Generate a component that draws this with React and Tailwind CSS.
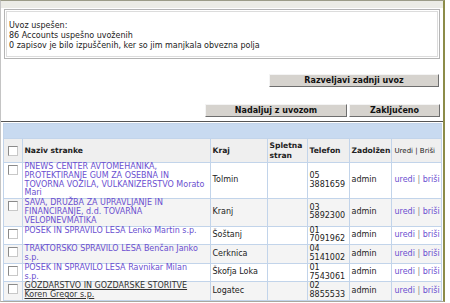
import React from "react";

const rows = [
  {
    name: ["PNEWS CENTER AVTOMEHANIKA,", "PROTEKTIRANJE GUM ZA OSEBNA IN", "TOVORNA VOZILA, VULKANIZERSTVO Morato", "Mari"],
    kraj: "Tolmin",
    tel: ["05", "3881659"],
  },
  {
    name: ["SAVA, DRUŽBA ZA UPRAVLJANJE IN", "FINANCIRANJE, d.d. TOVARNA", "VELOPNEVMATIKA"],
    kraj: "Kranj",
    tel: ["03", "5892300"],
  },
  { name: ["POSEK IN SPRAVILO LESA Lenko Martin s.p."], kraj: "Šoštanj", tel: ["01", "7091962"] },
  { name: ["TRAKTORSKO SPRAVILO LESA Benčan Janko", "s.p."], kraj: "Cerknica", tel: ["04", "5141002"] },
  { name: ["POSEK IN SPRAVILO LESA Ravnikar Milan", "s.p."], kraj: "Škofja Loka", tel: ["01", "7543061"] },
  { name: ["GOZDARSTVO IN GOZDARSKE STORITVE", "Koren Gregor s.p."], kraj: "Logatec", tel: ["02", "8855533"], hover: true },
];

function Checkbox() {
  return (
    <span className="block w-[10px] h-[10px] border border-[#8a8a8a] border-r-[#c8c8c8] border-b-[#c8c8c8] bg-white" />
  );
}

function Button({ children, className }) {
  return (
    <button
      className={
        "h-[13px] bg-[#d6d3ce] border border-[#f4f4f4] border-r-[#6e6e6e] border-b-[#6e6e6e] text-[8px] font-bold leading-[11px] text-[#111] " +
        className
      }
    >
      {children}
    </button>
  );
}

export default function App() {
  return (
    <div className="w-[450px] h-[303px] bg-white overflow-hidden font-['DejaVu_Sans',sans-serif] text-[8px] text-[#222]">
      <div className="w-[445px] h-[302px] border-t border-l border-r-2 border-b border-t-[#9c9c88] border-l-[#c4c4c4] border-r-[#8c8c48] border-b-[#a8a8a0] flex flex-col">
        <div className="h-[7px] bg-[#ececE6] shrink-0" />

        {/* Rezultat uvoza */}
        <div className="mx-[3px] mt-[1px] h-[50px] border border-[#b4b4b4] p-px shrink-0">
          <div className="h-full border border-[#dcdcdc] pt-[9px] pl-[2px] leading-[10px]">
            <div>Uvoz uspešen:</div>
            <div>86 Accounts uspešno uvoženih</div>
            <div>0 zapisov je bilo izpuščenih, ker so jim manjkala obvezna polja</div>
          </div>
        </div>

        <div className="flex justify-end pr-[4px] mt-[15px]">
          <Button className="w-[170px]">Razveljavi zadnji uvoz</Button>
        </div>
        <div className="flex justify-end gap-[2px] pr-[3px] mt-[17px]">
          <Button className="w-[142px]">Nadaljuj z uvozom</Button>
          <Button className="w-[91px]">Zaključeno</Button>
        </div>

        <div className="mt-[4px] border-t border-[#555]" />

        {/* Tabela strank */}
        <div className="ml-[2px] mr-px mt-px border border-[#c2d4ea] border-b-0">
          <div className="h-[14px] bg-[#c8daf0]" />
          <table className="w-full border-collapse table-fixed">
            <colgroup>
              <col className="w-[18px]" />
              <col className="w-[188px]" />
              <col className="w-[57px]" />
              <col className="w-[40px]" />
              <col className="w-[42px]" />
              <col className="w-[42px]" />
              <col />
            </colgroup>
            <thead>
              <tr className="bg-[#efefef] h-[24px] font-bold leading-[10px] text-[7.6px]">
                <th className="border border-[#c2d4ea] border-l-0 align-middle pl-[4px]">
                  <Checkbox />
                </th>
                <th className="border border-[#c2d4ea] text-left px-[2px]">Naziv stranke</th>
                <th className="border border-[#c2d4ea] text-left px-[2px]">Kraj</th>
                <th className="border border-[#c2d4ea] text-left px-[2px]">
                  Spletna
                  <br />
                  stran
                </th>
                <th className="border border-[#c2d4ea] text-left px-[2px]">Telefon</th>
                <th className="border border-[#c2d4ea] text-left px-[2px] whitespace-nowrap">Zadolžen</th>
                <th className="border border-[#c2d4ea] border-r-0 text-left pl-[3px] pr-0 font-normal text-[7px] whitespace-nowrap">
                  Uredi | Briši
                </th>
              </tr>
            </thead>
            <tbody className="leading-[8.8px]">
              {rows.map((r, i) => (
                <tr key={i} className={i % 2 === 1 ? "bg-[#f4f4f4]" : "bg-white"}>
                  <td className="border border-[#c2d4ea] border-l-0 align-top pl-[4px] pt-[2px]">
                    <Checkbox />
                  </td>
                  <td className="border border-[#c2d4ea] align-top px-[2px]">
                    <a
                      href="#"
                      className={r.hover ? "text-[#333] underline" : "text-[#6a4fd0] no-underline"}
                    >
                      {r.name.map((l, j) => (
                        <span key={j} className="block whitespace-nowrap">
                          {l}
                        </span>
                      ))}
                    </a>
                  </td>
                  <td className="border border-[#c2d4ea] px-[2px] align-middle whitespace-nowrap">{r.kraj}</td>
                  <td className="border border-[#c2d4ea] px-[2px]" />
                  <td className="border border-[#c2d4ea] px-[2px] align-middle">
                    {r.tel[0]}
                    <br />
                    {r.tel[1]}
                  </td>
                  <td className="border border-[#c2d4ea] px-[2px] align-middle">admin</td>
                  <td className="border border-[#c2d4ea] border-r-0 pl-[3px] pr-0 align-middle whitespace-nowrap">
                    <a href="#" className="text-[#6a4fd0]">uredi</a>
                    <span className="text-[#888]"> | </span>
                    <a href="#" className="text-[#6a4fd0]">briši</a>
                  </td>
                </tr>
              ))}
            </tbody>
          </table>
        </div>
      </div>
    </div>
  );
}
